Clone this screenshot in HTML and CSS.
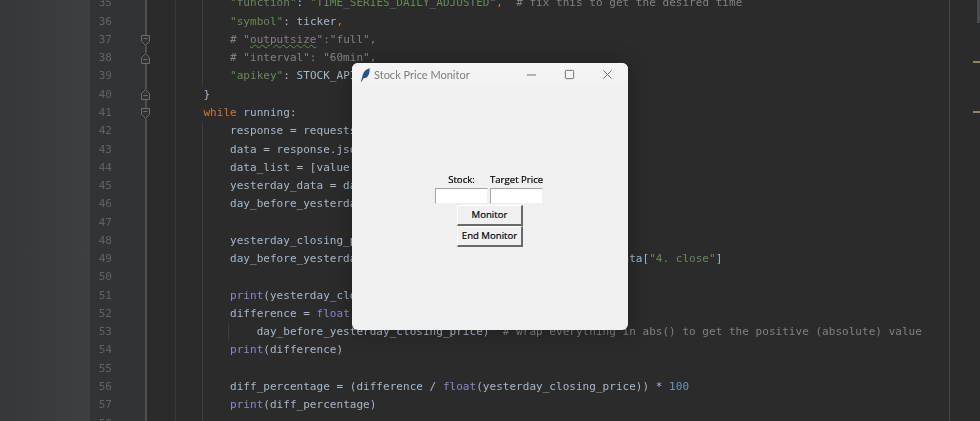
FILE: index.html
```html
<!DOCTYPE html>
<html lang="en">
<head>
<meta charset="utf-8">
<title>Stock Price Monitor</title>
<link rel="stylesheet" href="styles.css">
</head>
<body>
<div class="ide">
  <div class="side"></div>
  <main class="editor">
    <div class="row"><span class="num">35</span><span class="fold"></span><span class="code g1 g2">        <i class="s">"function"</i>: <i class="s">"TIME_SERIES_DAILY_ADJUSTED"</i><i class="k">,</i>  <i class="c"># fix this to get the desired time</i></span></div>
    <div class="row"><span class="num">36</span><span class="fold"></span><span class="code g1 g2">        <i class="s">"symbol"</i>: ticker<i class="k">,</i></span></div>
    <div class="row"><span class="num">37</span><span class="fold"><svg class="foldicon" viewBox="0 0 9 11"><path d="M.5.5h8v6l-4 4-4-4zM2.5 3.5h4"/></svg></span><span class="code g1 g2">        <i class="c"># "<u class="typo">outputsize</u>":"full",</i></span></div>
    <div class="row"><span class="num">38</span><span class="fold"><svg class="foldicon" viewBox="0 0 9 11"><path d="M.5 10.5h8v-6l-4-4-4 4zM2.5 6.5h4"/></svg></span><span class="code g1 g2">        <i class="c"># "interval": "60min",</i></span></div>
    <div class="row"><span class="num">39</span><span class="fold"></span><span class="code g1 g2">        <i class="s">"apikey"</i>: STOCK_API_KEY</span></div>
    <div class="row"><span class="num">40</span><span class="fold"><svg class="foldicon" viewBox="0 0 9 11"><path d="M.5 10.5h8v-6l-4-4-4 4zM2.5 6.5h4"/></svg></span><span class="code g1">    }</span></div>
    <div class="row"><span class="num">41</span><span class="fold"><svg class="foldicon" viewBox="0 0 9 11"><path d="M.5.5h8v6l-4 4-4-4zM2.5 3.5h4"/></svg></span><span class="code g1">    <i class="k">while</i> running:</span></div>
    <div class="row"><span class="num">42</span><span class="fold"></span><span class="code g1 g2">        response = requests.get(url, params=parameters)</span></div>
    <div class="row"><span class="num">43</span><span class="fold"></span><span class="code g1 g2">        data = response.json()["Time Series (Daily)"]</span></div>
    <div class="row"><span class="num">44</span><span class="fold"></span><span class="code g1 g2">        data_list = [value for (key, value) in data.items()]</span></div>
    <div class="row"><span class="num">45</span><span class="fold"></span><span class="code g1 g2">        yesterday_data = data_list[0]</span></div>
    <div class="row"><span class="num">46</span><span class="fold"></span><span class="code g1 g2">        day_before_yesterday_data = data_list[1]</span></div>
    <div class="row"><span class="num">47</span><span class="fold"></span><span class="code g1 g2"> </span></div>
    <div class="row"><span class="num">48</span><span class="fold"></span><span class="code g1 g2">        yesterday_closing_price = yesterday_data["4. close"]</span></div>
    <div class="row"><span class="num">49</span><span class="fold"></span><span class="code g1 g2">        day_before_yesterday_closing_price = day_before_yesterday_data[<i class="s">"4. close"</i>]</span></div>
    <div class="row"><span class="num">50</span><span class="fold"></span><span class="code g1 g2"> </span></div>
    <div class="row"><span class="num">51</span><span class="fold"></span><span class="code g1 g2">        <i class="b">print</i>(yesterday_closing_price)</span></div>
    <div class="row"><span class="num">52</span><span class="fold"></span><span class="code g1 g2">        difference = <i class="b">float</i>(yesterday_closing_price) - float(</span></div>
    <div class="row"><span class="num">53</span><span class="fold"></span><span class="code g1 g2 g3">            day_before_yesterday_closing_price)  <i class="c"># wrap everything in abs() to get the positive (absolute) value</i></span></div>
    <div class="row"><span class="num">54</span><span class="fold"></span><span class="code g1 g2">        <i class="b">print</i>(difference)</span></div>
    <div class="row"><span class="num">55</span><span class="fold"></span><span class="code g1 g2"> </span></div>
    <div class="row"><span class="num">56</span><span class="fold"></span><span class="code g1 g2">        diff_percentage = (difference / <i class="b">float</i>(yesterday_closing_price)) * <i class="n">100</i></span></div>
    <div class="row"><span class="num">57</span><span class="fold"></span><span class="code g1 g2">        <i class="b">print</i>(diff_percentage)</span></div>
    <div class="row"><span class="num">58</span><span class="fold"></span><span class="code g1 g2"> </span></div>
    <div class="margin"></div>
    <div class="thumb"></div>
    <div class="mark mark-a"></div>
    <div class="mark mark-b"></div>
  </main>
</div>
<section class="window">
  <header class="titlebar">
    <svg class="feather" viewBox="0 0 10 14"><path d="M.8 13.800 2.400 8.500C2.800 4.500 5.500 1.500 9.600.3 9.900 4 9 7.500 6.800 9.500L4.800 10 3.600 10.300 1.500 13.800z"/></svg>
    <span class="title">Stock Price Monitor</span>
    <span class="controls">
      <svg class="ctl" viewBox="0 0 12 12"><path d="M1 6.500h10"/></svg>
      <svg class="ctl" viewBox="0 0 12 12"><rect x="1.500" y="1.500" width="9" height="9" rx="1"/></svg>
      <svg class="ctl" viewBox="0 0 12 12"><path d="M1.500 1.500l9 9M10.500 1.500l-9 9"/></svg>
    </span>
  </header>
  <div class="form">
    <span class="label">Stock:</span>
    <span class="label">Target Price</span>
    <input class="entry" type="text" aria-label="Stock">
    <input class="entry" type="text" aria-label="Target Price">
    <button class="btn" type="button">Monitor</button>
    <button class="btn" type="button">End Monitor</button>
  </div>
</section>
</body>
</html>
```
FILE: styles.css
```css
* { box-sizing: border-box; }
html, body { margin: 0; height: 421px; overflow: hidden; background: #2b2b2b; }
.ide { display: flex; height: 421px; filter: blur(.3px); }
.side { width: 90px; flex: none; background: linear-gradient(90deg, #35383a, #3d4042); }
.editor { position: relative; flex: 1; margin-top: -5.600px; height: 426.600px; overflow: hidden; background: #2b2b2b; font: 11px/18.27px "DejaVu Sans Mono", "Liberation Mono", monospace; letter-spacing: .03px; color: #a9b7c6; }
.row { display: flex; height: 18.27px; white-space: pre; }
.num { width: 55px; flex: none; padding-right: 33px; text-align: right; color: #606366; background: #313335; }
.fold { width: 30px; flex: none; display: flex; align-items: center; border-left: 2px solid #4d4f50; }
.foldicon { width: 9px; height: 11px; margin-left: -6px; background: #2b2b2b; fill: #313335; stroke: #6a6c6d; stroke-width: 1; }
.code { flex: 1; padding-left: 1.8px; background-repeat: no-repeat; }
.code i { font-style: normal; }
.g1 { background-image: linear-gradient(#383838, #383838); background-size: 1px 100%; background-position: 0 0; }
.g1.g2 { background-image: linear-gradient(#383838, #383838), linear-gradient(#3d3d3d, #3d3d3d); background-size: 1px 100%, 1px 100%; background-position: 0 0, 27px 0; }
.g1.g2.g3 { background-image: linear-gradient(#383838, #383838), linear-gradient(#3d3d3d, #3d3d3d), linear-gradient(#3d3d3d, #3d3d3d); background-size: 1px 100%, 1px 100%, 1px 100%; background-position: 0 0, 27px 0, 53px 0; }
.s { color: #6a8759; }
.k { color: #cc7832; }
.c { color: #808080; }
.b { color: #8888c6; }
.n { color: #6897bb; }
.typo { text-decoration: underline wavy #5f8a4f 1px; }
.margin { position: absolute; left: 859px; top: 0; bottom: 0; width: 1px; background: #464646; }
.thumb { position: absolute; right: 0; top: 0; width: 3px; height: 29px; background: #4a4c4d; }
.mark { position: absolute; right: 0; width: 7px; height: 2px; background: #8f8468; }
.mark-a { top: 67px; }
.mark-b { top: 117px; }
.window { position: absolute; left: 352px; top: 63px; width: 276px; height: 267px; border-radius: 6px; background: #f0f0f0; box-shadow: 0 2px 22px rgba(0, 0, 0, .28); display: flex; flex-direction: column; overflow: hidden; filter: blur(.25px); }
.titlebar { height: 23px; flex: none; display: flex; align-items: center; padding-left: 8px; background: linear-gradient(#f5f5f5, #f1f1f1); }
.feather { width: 10px; height: 14px; margin-right: 4px; fill: #2a5488; }
.title { font: 11px Lato, "Open Sans", sans-serif; color: #7d7d7d; }
.controls { margin-left: auto; display: flex; gap: 27px; padding-right: 15px; }
.ctl { width: 11px; height: 11px; fill: none; stroke: #666; stroke-width: 1; }
.form { display: grid; grid-template-columns: 53px 53px; grid-template-rows: 16px 17px 21px 21px; column-gap: 2px; justify-content: center; margin: 86px 2px 0 0; font: 9.6px "Open Sans", "Noto Sans", sans-serif; -webkit-text-stroke: .2px #000; color: #000; }
.label { text-align: center; line-height: 15.500px; white-space: nowrap; }
.entry { width: 53px; height: 16px; padding: 0; background: #fff; border: 1px solid; border-color: #a5a5a5 #f0f0f0 #f0f0f0 #a5a5a5; border-radius: 0; }
.btn { grid-column: 1 / 3; justify-self: center; width: 66px; height: 21px; margin-left: 2px; padding: 0 0 2px; font: inherit; color: #000; background: #f0f0f0; border: 1px solid; border-color: #fff #696969 #696969 #fff; border-width: 1px 2px 2px 1px; border-radius: 0; }
```
